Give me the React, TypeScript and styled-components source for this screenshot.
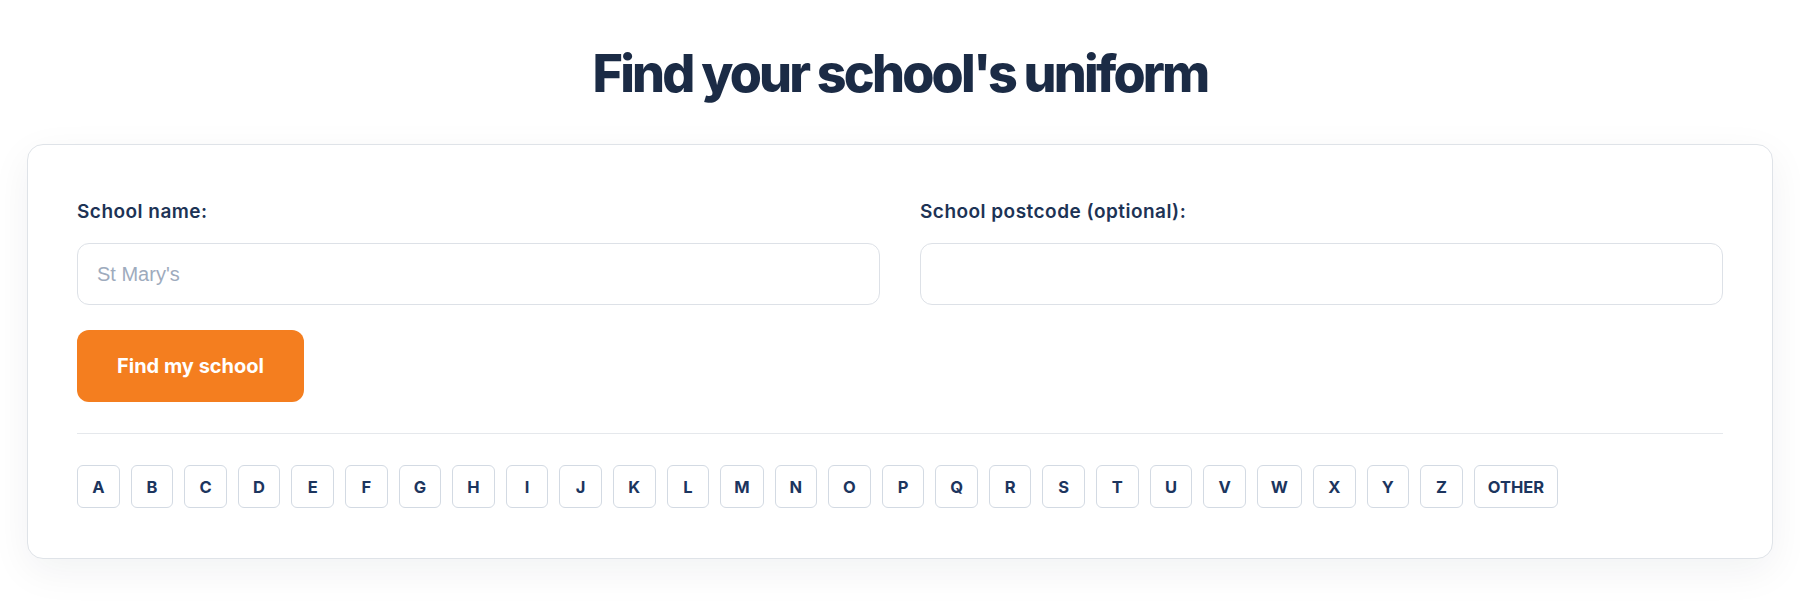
import React from "react";
import styled, { createGlobalStyle } from "styled-components";

const GlobalStyle = createGlobalStyle`
  html, body {
    margin: 0;
    padding: 0;
    background: #ffffff;
  }
  body {
    font-family: Inter, "Noto Sans", sans-serif;
    -webkit-font-smoothing: antialiased;
  }
  * { box-sizing: border-box; }
`;

const Page = styled.main`
  width: 1800px;
  min-height: 602px;
  padding: 43px 27px 40px;
`;

const Title = styled.h1`
  margin: 0 0 39px;
  text-align: center;
  font-family: Inter, "Noto Sans", sans-serif;
  font-weight: 800;
  font-size: 52px;
  line-height: 62px;
  letter-spacing: -0.054em;
  color: #1b2b45;
`;

const Card = styled.section`
  background: #ffffff;
  border: 1px solid #dfe3e8;
  border-radius: 16px;
  padding: 54px 49px 50px;
  box-shadow: 0 12px 40px rgba(20, 30, 50, 0.06);
`;

const Fields = styled.div`
  display: grid;
  grid-template-columns: 1fr 1fr;
  column-gap: 40px;
`;

const Field = styled.div`
  display: flex;
  flex-direction: column;
`;

const Label = styled.label`
  font-family: Inter, "Noto Sans", sans-serif;
  font-weight: 600;
  font-size: 19px;
  line-height: 26px;
  letter-spacing: 0.025em;
  color: #1d3355;
  margin-bottom: 18px;
`;

const Input = styled.input`
  height: 62px;
  width: 100%;
  border: 1px solid #dde1e7;
  border-radius: 12px;
  padding: 0 19px;
  font-family: "Liberation Sans", Arial, sans-serif;
  font-size: 20px;
  color: #1d3355;
  background: #ffffff;
  outline: none;
  &::placeholder {
    color: #9eabbd;
  }
`;

const SubmitButton = styled.button`
  margin-top: 25px;
  height: 72px;
  padding: 0 40px;
  border: none;
  border-radius: 12px;
  background: #f47e1f;
  color: #ffffff;
  font-family: Inter, "Noto Sans", sans-serif;
  font-weight: 700;
  font-size: 20px;
  letter-spacing: 0;
  cursor: pointer;
`;

const Divider = styled.hr`
  margin: 31px 0 31px;
  border: none;
  border-top: 1px solid #e5e8ec;
  height: 0;
`;

const LetterRow = styled.nav`
  display: flex;
  flex-wrap: wrap;
  gap: 11px;
`;

const LetterButton = styled.button`
  height: 43px;
  min-width: 42.6px;
  padding: 0 13px;
  border: 1px solid #d3dae3;
  border-radius: 6px;
  background: #ffffff;
  color: #1c355e;
  font-family: Inter, "Noto Sans", sans-serif;
  font-weight: 700;
  font-size: 16.5px;
  display: inline-flex;
  align-items: center;
  justify-content: center;
  cursor: pointer;
`;

const letters = "ABCDEFGHIJKLMNOPQRSTUVWXYZ".split("").concat(["OTHER"]);

export default function App() {
  return (
    <>
      <GlobalStyle />
      <Page>
        <Title>Find your school's uniform</Title>
        <Card>
          <Fields>
            <Field>
              <Label htmlFor="school-name">School name:</Label>
              <Input id="school-name" placeholder="St Mary's" />
            </Field>
            <Field>
              <Label htmlFor="school-postcode">School postcode (optional):</Label>
              <Input id="school-postcode" />
            </Field>
          </Fields>
          <SubmitButton>Find my school</SubmitButton>
          <Divider />
          <LetterRow>
            {letters.map((l) => (
              <LetterButton key={l}>{l}</LetterButton>
            ))}
          </LetterRow>
        </Card>
      </Page>
    </>
  );
}
